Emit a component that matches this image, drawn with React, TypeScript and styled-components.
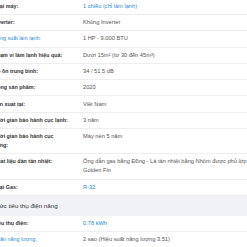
import React from 'react';
import styled, { createGlobalStyle } from 'styled-components';

// ============================================================================
// DATA
// ============================================================================

interface SpecItem {
  label: string;
  value: string;
  labelLink?: boolean;
  valueLink?: boolean;
}

interface SpecGroup {
  title?: string;
  items: SpecItem[];
}

const groups: SpecGroup[] = [
  {
    items: [
      { label: 'Loại máy:', value: '1 chiều (chỉ làm lạnh)', valueLink: true },
      { label: 'Inverter:', value: 'Không Inverter' },
      { label: 'Công suất làm lạnh:', value: '1 HP - 9.000 BTU', labelLink: true },
      { label: 'Phạm vi làm lạnh hiệu quả:', value: 'Dưới 15m² (từ 30 đến 45m³)' },
      { label: 'Độ ồn trung bình:', value: '34 / 51.5 dB' },
      { label: 'Dòng sản phẩm:', value: '2020' },
      { label: 'Sản xuất tại:', value: 'Việt Nam' },
      { label: 'Thời gian bảo hành cục lạnh:', value: '3 năm' },
      { label: 'Thời gian bảo hành cục nóng:', value: 'Máy nén 5 năm' },
      {
        label: 'Chất liệu dàn tản nhiệt:',
        value: 'Ống dẫn gas bằng Đồng - Lá tản nhiệt bằng Nhôm được phủ lớp Golden Fin',
      },
      { label: 'Loại Gas:', value: 'R-32', valueLink: true },
    ],
  },
  {
    title: 'Mức tiêu thụ điện năng',
    items: [
      { label: 'Tiêu thụ điện:', value: '0.78 kWh', valueLink: true },
      { label: 'Nhãn năng lượng:', value: '2 sao (Hiệu suất năng lượng 3.51)', labelLink: true },
    ],
  },
];

// ============================================================================
// STYLED COMPONENTS
// ============================================================================

const GlobalStyle = createGlobalStyle`
  html, body {
    margin: 0;
    padding: 0;
    background: #ffffff;
    overflow: hidden;
  }
  body {
    font-family: 'Liberation Sans', Arial, sans-serif;
  }
`;

const SpecTable = styled.div`
  width: 262px;
  margin: -1.3px 0 0 -6.7px;
`;

const GroupTitle = styled.div`
  background: #f1f2f5;
  padding: 5.5px 6px 5.5px 1px;
  font-size: 6.2px;
  line-height: 9px;
  color: #333333;
`;

const List = styled.ul`
  list-style: none;
  margin: 0;
  padding: 0;
`;

const Row = styled.li`
  display: flex;
  align-items: flex-start;
  border-bottom: 1px solid #eeeeee;
  padding: 3.15px 0;
`;

const Label = styled.span<{ $link?: boolean }>`
  flex: 0 0 75px;
  padding-right: 14.7px;
  font-size: 5.35px;
  line-height: 9px;
  font-weight: ${({ $link }) => ($link ? 400 : 700)};
  color: ${({ $link }) => ($link ? '#288ad6' : '#333333')};
`;

const Value = styled.span<{ $link?: boolean }>`
  flex: 1;
  font-size: 5.7px;
  line-height: 9px;
  color: ${({ $link }) => ($link ? '#288ad6' : '#555555')};
`;

// ============================================================================
// COMPONENT
// ============================================================================

export default function App() {
  return (
    <>
      <GlobalStyle />
      <SpecTable>
        {groups.map((group, gi) => (
          <section key={gi}>
            {group.title && <GroupTitle>{group.title}</GroupTitle>}
            <List>
              {group.items.map((item) => (
                <Row key={item.label}>
                  <Label $link={item.labelLink}>{item.label}</Label>
                  <Value $link={item.valueLink}>{item.value}</Value>
                </Row>
              ))}
            </List>
          </section>
        ))}
      </SpecTable>
    </>
  );
}
